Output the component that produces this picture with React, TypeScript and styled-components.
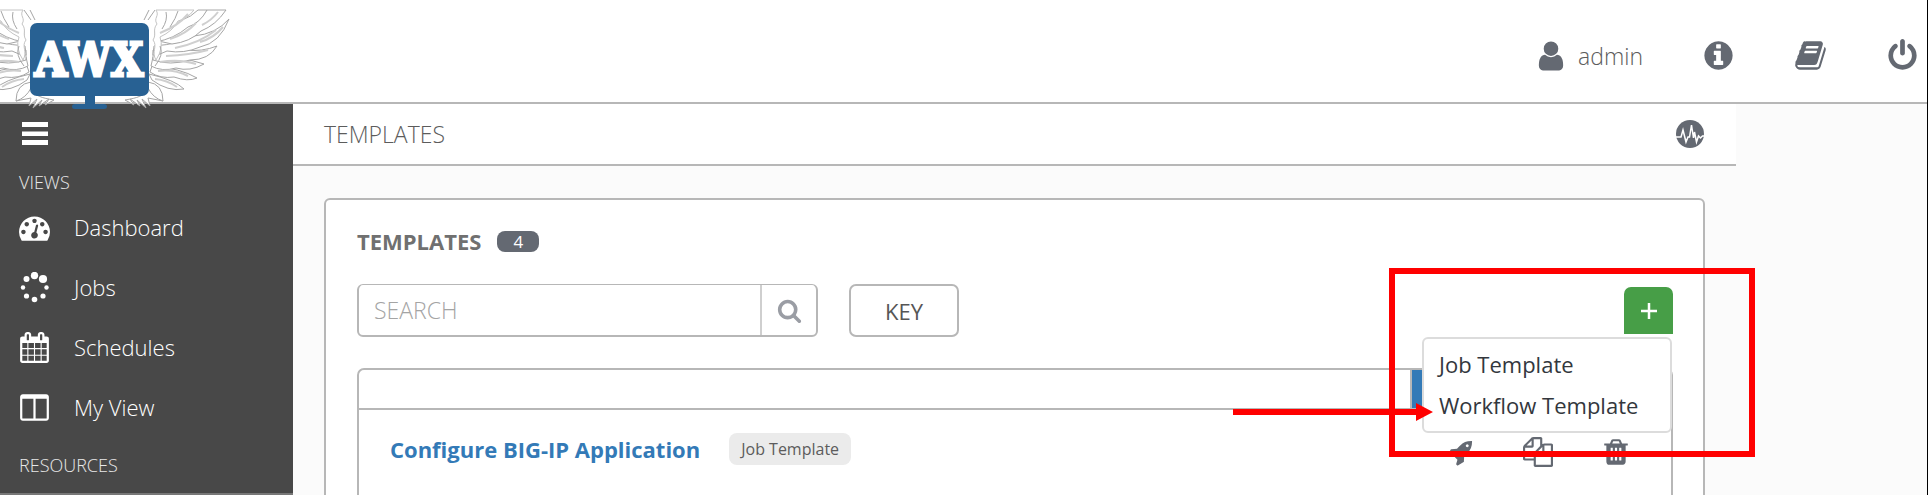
import React from "react";
import styled, { createGlobalStyle } from "styled-components";

const line = "#b7b7b7";
const slate = "#646972";

const GlobalStyle = createGlobalStyle`
  *, *::before, *::after { box-sizing: border-box; }
  body { margin: 0; background: #fbfbfb; font-family: "Open Sans", sans-serif; color: #707070; }
  button, input { font-family: inherit; }
  button { padding: 0; border: 0; background: none; cursor: pointer; color: inherit; }
  a { text-decoration: none; color: inherit; }
`;

const Shell = styled.div`
  height: 100vh;
  overflow: hidden;
  display: flex;
  flex-direction: column;
  border-right: 1px solid #000;
`;

const Header = styled.header`
  position: relative;
  z-index: 1;
  flex: none;
  height: 104px;
  display: flex;
  justify-content: space-between;
  background: #fff;
  border-bottom: 2px solid ${line};
`;

const LogoLink = styled.a`
  display: block;
  width: 240px;
  height: 110px;
`;

const Account = styled.nav`
  display: flex;
  align-items: center;
  gap: 59px;
  padding: 9px 8px 0 0;
  color: ${slate};
`;

const AccountLink = styled.a`
  display: flex;
  align-items: center;
  gap: 10px;
  font-size: 23px;
  line-height: 32px;
  font-weight: 300;

  span { color: #5c5c5c; }
`;

const Body = styled.div`
  flex: 1;
  min-height: 0;
  display: flex;
  padding-right: 191px;
`;

const Sidebar = styled.nav`
  flex: none;
  width: 293px;
  padding-top: 16px;
  background: #484848;
  border-bottom: 2px solid #777;
  color: #fff;
`;

const MenuToggle = styled.button`
  display: flex;
  width: 26px;
  height: 26px;
  margin-left: 22px;
`;

const SideHeading = styled.h2`
  margin: 0;
  padding-left: 19px;
  font-size: 18px;
  line-height: 24px;
  font-weight: 300;
  color: #e8e8e8;
`;

const SideGroup = styled.section`
  padding-top: 24px;
  & + & { padding-top: 16px; }
`;

const SideList = styled.ul`
  margin: 0;
  padding: 3px 0 0;
  list-style: none;
`;

const SideLink = styled.a`
  display: flex;
  align-items: center;
  gap: 24px;
  height: 60px;
  padding-left: 19px;
  font-size: 22px;
  font-weight: 300;
`;

const Main = styled.main`
  flex: 1;
  min-width: 0;
`;

const Crumbs = styled.div`
  display: flex;
  align-items: center;
  justify-content: space-between;
  height: 62px;
  padding: 0 32px 0 31px;
  background: #fff;
  border-bottom: 2px solid ${line};
  font-size: 23px;
  font-weight: 300;
  color: #5c5c5c;
`;

const IconButton = styled.button`
  display: flex;
  color: ${slate};
`;

const Panel = styled.section`
  margin: 32px 31px;
  height: 400px;
  padding: 25px 30px 27px 31px;
  background: #fff;
  border: 2px solid ${line};
  border-radius: 6px;
`;

const PanelTitle = styled.h1`
  display: flex;
  align-items: center;
  gap: 16px;
  margin: 0;
  font-size: 22px;
  line-height: 32px;
`;

const Count = styled.span`
  width: 42px;
  border-radius: 8px;
  background: ${slate};
  color: #fff;
  font-size: 17px;
  line-height: 21px;
  font-weight: 400;
  text-align: center;
`;

const Toolbar = styled.div`
  display: flex;
  align-items: center;
  gap: 31px;
  margin: 27px 0 31px;
`;

const SearchForm = styled.form`
  display: flex;
  width: 461px;
  height: 53px;
  border: 2px solid ${line};
  border-top-width: 1px;
  border-radius: 6px;
`;

const SearchInput = styled.input`
  flex: 1;
  min-width: 0;
  padding: 0 15px;
  border: 0;
  outline: 0;
  background: none;
  font-size: 23px;
  font-weight: 300;
  &::placeholder { color: #a4a4a4; opacity: 1; }
`;

const SearchButton = styled.button`
  display: flex;
  align-items: center;
  justify-content: center;
  width: 56px;
  border-left: 2px solid #cfcfcf;
  color: #9a9da4;
`;

const KeyButton = styled.button`
  width: 110px;
  height: 53px;
  border: 2px solid ${line};
  border-radius: 7px;
  font-size: 22px;
  color: #565656;
`;

const AddMenu = styled.div`
  position: relative;
  z-index: 2;
  margin-left: auto;
`;

const AddButton = styled.button`
  display: flex;
  align-items: center;
  justify-content: center;
  width: 49px;
  height: 47px;
  border-radius: 7px 7px 0 0;
  background: #479e47;
  color: #fff;
`;

const Dropdown = styled.ul`
  position: absolute;
  top: 50px;
  right: 1px;
  width: 250px;
  margin: 0;
  padding: 5px 0;
  list-style: none;
  background: #fff;
  border: 2px solid #dcdcdc;
  border-radius: 6px;
`;

const DropdownLink = styled.a`
  display: block;
  padding-left: 15px;
  font-size: 22px;
  line-height: 41px;
  color: #33373d;
`;

const Highlight = styled.div`
  position: absolute;
  top: -19px;
  right: -82px;
  width: 366px;
  height: 189px;
  border: 6px solid #f00;
  pointer-events: none;
`;

const Pointer = styled.svg`
  position: absolute;
  top: 116px;
  right: 240px;
`;

const List = styled.div`
  height: 240px;
  border: 2px solid ${line};
  border-radius: 7px;
`;

const ListHeader = styled.div`
  display: flex;
  justify-content: flex-end;
  height: 40px;
  border-bottom: 2px solid ${line};
`;

const ActiveSort = styled.div`
  width: 261px;
  border-left: 2px solid ${line};
  background: linear-gradient(#337ab7, #337ab7) no-repeat 0 0 / 240px 100%;
`;

const Row = styled.div`
  display: flex;
  align-items: center;
  height: 78px;
  padding: 0 40px 0 31px;
`;

const RowLink = styled.a`
  font-size: 22px;
  font-weight: 700;
  color: #337ab7;
`;

const Tag = styled.span`
  margin-left: 29px;
  padding: 0 12px;
  border-radius: 8px;
  background: #ebebeb;
  color: #5c5c5c;
  font-size: 16px;
  line-height: 32px;
`;

const RowActions = styled.div`
  display: flex;
  gap: 48px;
  margin: 6px 0 0 auto;
`;

const ActionButton = styled(IconButton)`
  width: 30px;
  height: 30px;
  align-items: center;
  justify-content: center;
`;

const paths = {
  user: "M1536 1399q0 109-62.5 187t-150.5 78h-854q-88 0-150.5-78t-62.5-187q0-85 8.5-160.5t31.5-152 58.5-131 94-89 134.5-34.5q131 128 313 128t313-128q76 0 134.5 34.5t94 89 58.5 131 31.5 152 8.5 160.5zm-256-887q0 159-112.5 271.5t-271.5 112.5-271.5-112.5-112.5-271.5 112.5-271.5 271.5-112.5 271.5 112.5 112.5 271.5z",
  info: "M1152 1376v-160q0-14-9-23t-23-9h-96v-512q0-14-9-23t-23-9h-320q-14 0-23 9t-9 23v160q0 14 9 23t23 9h96v320h-96q-14 0-23 9t-9 23v160q0 14 9 23t23 9h448q14 0 23-9t9-23zm-128-896v-160q0-14-9-23t-23-9h-192q-14 0-23 9t-9 23v160q0 14 9 23t23 9h192q14 0 23-9t9-23zm640 416q0 209-103 385.5t-279.5 279.5-385.5 103-385.5-103-279.5-279.5-103-385.5 103-385.5 279.5-279.5 385.5-103 385.5 103 279.5 279.5 103 385.5z",
  book: "M1703 478q40 57 18 129l-275 906q-19 64-76.5 107.5t-122.5 43.5h-923q-77 0-148.5-53.5t-99.5-131.5q-24-67-2-127 0-4 3-27t4-37q1-8-3-21.5t-3-19.5q2-11 8-21t16.5-23.5 16.5-23.5q23-38 45-91.5t30-91.5q3-10 .5-30t-.5-28q3-11 17-28t17-23q21-36 42-92t25-90q1-9-2.5-32t.5-28q4-13 22-30.5t22-22.5q19-26 42.5-84.5t27.5-96.5q1-8-3-25.5t-2-26.5q2-8 9-18t18-23 17-21q8-12 16.5-30.5t15-35 16-36 19.5-32 26.5-23.5 36-11.5 47.5 5.5l-1 3q38-9 51-9h761q74 0 114 56t18 130l-274 906q-36 119-71.5 153.5t-128.5 34.5h-869q-27 0-38 15-11 16-1 43 24 70 144 70h923q29 0 56-15.5t35-41.5l300-987q7-22 5-57 38 15 59 43zm-1064 2q-4 13 2 22.5t20 9.5h608q13 0 25.5-9.5t16.5-22.5l21-64q4-13-2-22.5t-20-9.5h-608q-13 0-25.5 9.5t-16.5 22.5zm-83 256q-4 13 2 22.5t20 9.5h608q13 0 25.5-9.5t16.5-22.5l21-64q4-13-2-22.5t-20-9.5h-608q-13 0-25.5 9.5t-16.5 22.5z",
  power: "M1664 896q0 156-61 298t-164 245-245 164-298 61-298-61-245-164-164-245-61-298q0-182 80.5-343t226.5-270q43-32 95.5-25t83.5 50q32 42 24.5 94.5t-49.5 84.5q-98 74-151.5 181t-53.5 228q0 104 40.5 198.5t109.5 163.5 163.5 109.5 198.5 40.5 198.5-40.5 163.5-109.5 109.5-163.5 40.5-198.5q0-121-53.5-228t-151.5-181q-42-32-49.5-84.5t24.5-94.5q31-43 84-50t95 25q146 109 226.5 270t80.5 343zm-640-768v640q0 52-38 90t-90 38-90-38-38-90v-640q0-52 38-90t90-38 90 38 38 90z",
  dashboard: "M384 1152q0-53-37.5-90.5t-90.5-37.5-90.5 37.5-37.5 90.5 37.5 90.5 90.5 37.5 90.5-37.5 37.5-90.5zm192-448q0-53-37.5-90.5t-90.5-37.5-90.5 37.5-37.5 90.5 37.5 90.5 90.5 37.5 90.5-37.5 37.5-90.5zm428 481l101-382q6-26-7.5-48.5t-38.5-29.5-48 6.5-30 39.5l-101 382q-60 5-107 43.5t-63 98.5q-20 77 20 146t117 89 146-20 89-117q16-60-6-117t-72-91zm660-33q0-53-37.5-90.5t-90.5-37.5-90.5 37.5-37.5 90.5 37.5 90.5 90.5 37.5 90.5-37.5 37.5-90.5zm-640-640q0-53-37.5-90.5t-90.5-37.5-90.5 37.5-37.5 90.5 37.5 90.5 90.5 37.5 90.5-37.5 37.5-90.5zm448 192q0-53-37.5-90.5t-90.5-37.5-90.5 37.5-37.5 90.5 37.5 90.5 90.5 37.5 90.5-37.5 37.5-90.5zm320 448q0 261-141 483-19 29-54 29h-1402q-35 0-54-29-141-221-141-483 0-182 71-348t191-286 286-191 348-71 348 71 286 191 191 286 71 348z",
  calendar: "M192 1664h288v-288h-288v288zm352 0h320v-288h-320v288zm-352-352h288v-320h-288v320zm352 0h320v-320h-320v320zm-352-384h288v-288h-288v288zm736 736h320v-288h-320v288zm-384-736h320v-288h-320v288zm768 736h288v-288h-288v288zm-384-352h320v-320h-320v320zm-352-864v-288q0-13-9.5-22.5t-22.5-9.5h-64q-13 0-22.5 9.5t-9.5 22.5v288q0 13 9.5 22.5t22.5 9.5h64q13 0 22.5-9.5t9.5-22.5zm736 864h288v-320h-288v320zm-384-384h320v-288h-320v288zm384 0h288v-288h-288v288zm32-480v-288q0-13-9.5-22.5t-22.5-9.5h-64q-13 0-22.5 9.5t-9.5 22.5v288q0 13 9.5 22.5t22.5 9.5h64q13 0 22.5-9.5t9.5-22.5zm384-64v1280q0 52-38 90t-90 38h-1408q-52 0-90-38t-38-90v-1280q0-52 38-90t90-38h128v-96q0-66 47-113t113-47h64q66 0 113 47t47 113v96h384v-96q0-66 47-113t113-47h64q66 0 113 47t47 113v96h128q52 0 90 38t38 90z",
  columns: "M224 1536h608v-1152h-640v1120q0 13 9.5 22.5t22.5 9.5zm1376-32v-1120h-640v1152h608q13 0 22.5-9.5t9.5-22.5zm128-1216v1216q0 66-47 113t-113 47h-1344q-66 0-113-47t-47-113v-1216q0-66 47-113t113-47h1344q66 0 113 47t47 113z",
  search: "M1216 832q0-185-131.5-316.5t-316.5-131.5-316.5 131.5-131.5 316.5 131.5 316.5 316.5 131.5 316.5-131.5 131.5-316.5zm512 832q0 52-38 90t-90 38q-54 0-90-38l-343-342q-179 124-399 124-143 0-273.5-55.5t-225-150-150-225-55.5-273.5 55.5-273.5 150-225 225-150 273.5-55.5 273.5 55.5 225 150 150 225 55.5 273.5q0 220-124 399l343 343q37 37 37 90z",
  rocket: "M1440 448q0-40-28-68t-68-28-68 28-28 68 28 68 68 28 68-28 28-68zm224-288q0 249-75.5 430.5t-253.5 360.5q-81 80-195 176l-20 379q-2 16-16 26l-384 224q-7 4-16 4-12 0-23-9l-64-64q-13-14-8-32l85-276-281-281-276 85q-3 1-9 1-14 0-23-9l-64-64q-17-19-5-39l224-384q10-14 26-16l379-20q96-114 176-195 188-187 358-258t431-71q14 0 24 9.5t10 22.5z",
  copy: "M1696 384q40 0 68 28t28 68v1216q0 40-28 68t-68 28h-960q-40 0-68-28t-28-68v-288h-544q-40 0-68-28t-28-68v-672q0-40 20-88t48-76l408-408q28-28 76-48t88-20h416q40 0 68 28t28 68v328q68-40 128-40h416zm-544 213l-299 299h299v-299zm-640-384l-299 299h299v-299zm196 647l316-316v-416h-384v416q0 40-28 68t-68 28h-416v640h512v-256q0-40 20-88t48-76zm956 804v-1152h-384v416q0 40-28 68t-68 28h-416v640h896z",
  trash: "M704 1376v-704q0-14-9-23t-23-9h-64q-14 0-23 9t-9 23v704q0 14 9 23t23 9h64q14 0 23-9t9-23zm256 0v-704q0-14-9-23t-23-9h-64q-14 0-23 9t-9 23v704q0 14 9 23t23 9h64q14 0 23-9t9-23zm256 0v-704q0-14-9-23t-23-9h-64q-14 0-23 9t-9 23v704q0 14 9 23t23 9h64q14 0 23-9t9-23zm-544-992h448l-48-117q-7-9-17-11h-317q-10 2-17 11zm928 32v64q0 14-9 23t-23 9h-96v948q0 83-47 143.5t-113 60.5h-832q-66 0-113-58.5t-47-141.5v-952h-96q-14 0-23-9t-9-23v-64q0-14 9-23t23-9h309l70-167q15-37 54-63t79-26h320q40 0 79 26t54 63l70 167h309q14 0 23 9t9 23z",
};

function Icon({ name, size }: { name: keyof typeof paths; size: number }) {
  return (
    <svg width={size} height={size} viewBox="0 0 1792 1792" fill="currentColor" overflow="visible" aria-hidden="true">
      <path d={paths[name]} />
    </svg>
  );
}

function JobsIcon() {
  const dots = [[15.5, 3.5, 3.7], [24, 7, 4.1], [27.5, 15.5, 2.2], [24, 24, 2.6], [15.5, 27.5, 2.8], [7.5, 24, 2.6], [4, 15.5, 2.2], [7.5, 7, 3]];
  return (
    <svg width="31" height="31" fill="currentColor" aria-hidden="true">
      {dots.map(([x, y, r]) => <circle key={`${x}-${y}`} cx={x} cy={y} r={r} />)}
    </svg>
  );
}

function ActivityIcon() {
  return (
    <svg width="28" height="28" viewBox="0 0 28 28" fill="none" aria-hidden="true">
      <circle cx="14" cy="14" r="14" fill="currentColor" />
      <path d="M0 17h5l2-7 3 12 2-5h1.500L15.500 5l2 13 1-6 2 10 2-6 2 2 2-2h2" stroke="#fff" strokeWidth="1.500" />
    </svg>
  );
}

/* One wing, drawn to the right of the monitor; the left one mirrors it. */
function Wing() {
  return (
    <g fill="#fff" stroke="#a6a6a6" strokeWidth="1" strokeLinejoin="round">
      <path d="M148 88C145 96 137 98 125 100L134 105 130 99 140 106 137 100 146 108 142 99 150 106 148 98 163 101 154 90Z" />
      <path d="M148 82Q163 84 163 101Q153 98 148 88Z" />
      <path d="M149 74Q175 80 184 89Q168 92 152 80Z" />
      <path d="M152 66Q180 68 197 78Q188 82 174 77Q160 79 150 72Z" />
      <path d="M153 57Q180 56 204 64Q190 72 176 68Q162 72 151 66Z" />
      <path d="M153 50Q174 46 186 50Q202 52 217 46Q209 60 190 60Q170 66 153 60Z" />
      <path d="M154 46Q180 44 194 36Q216 34 229 19Q220 43 200 47Q184 54 167 51Q160 55 153 55Z" />
      <path d="M154 40Q172 38 184 27Q196 23 207 10H226Q216 25 201 31Q190 42 172 44Z" />
      <path d="M155 30Q172 28 182 20Q191 17 198 10H207Q200 23 188 27Q174 39 155 42Z" />
      <path d="M156 10C160 16 153 18 157 24C152 30 157 34 153 40C158 46 151 52 156 60Q164 48 160 37Q173 31 178 21Q187 19 194 10Z" stroke="#c4c4c4" />
      <path d="M149 10L144 20M155 10L148 20M160 46Q164 55 155 66M162 29Q168 20 166 12M170 27Q176 18 178 11" fill="none" />
      <path d="M160 33Q178 26 188 14M170 39Q186 34 196 23M175 48Q200 43 216 30M166 56Q190 55 208 50M160 62Q180 59 196 64M158 71Q174 69 188 76M155 79Q167 80 177 87M202 25Q212 20 218 12M200 42Q214 38 223 27" fill="none" stroke="#cfcfcf" strokeWidth="2" />
    </g>
  );
}

function Logo() {
  return (
    <svg width="240" height="110" viewBox="0 0 240 110" role="img" aria-label="AWX">
      <Wing />
      <g transform="translate(179 0) scale(-1 1)"><Wing /></g>
      <rect x="30" y="23" width="119" height="73" rx="7" fill="#286193" />
      <path d="M85 95h10v9h9q3 0 3 2.500t-3 2.500H75q-3 0-3-2.500t3-2.500h10z" fill="#286193" />
      <text x="89" y="76" textAnchor="middle" fontFamily="'DejaVu Serif Condensed', 'DejaVu Serif', serif" fontSize="46" fontWeight="700" fill="#fff" stroke="#fff" strokeWidth="3">AWX</text>
    </svg>
  );
}

export default function App() {
  return (
    <Shell>
      <GlobalStyle />
      <Header>
        <LogoLink href="#home" aria-label="AWX home"><Logo /></LogoLink>
        <Account aria-label="Account">
          <AccountLink href="#admin"><Icon name="user" size={34} /><span>admin</span></AccountLink>
          <AccountLink href="#about" aria-label="About"><Icon name="info" size={33} /></AccountLink>
          <AccountLink href="#docs" aria-label="Documentation"><Icon name="book" size={33} /></AccountLink>
          <AccountLink href="#logout" aria-label="Log out"><Icon name="power" size={33} /></AccountLink>
        </Account>
      </Header>
      <Body>
        <Sidebar aria-label="Main">
          <MenuToggle aria-label="Toggle menu">
            <svg width="26" height="26" fill="currentColor" aria-hidden="true">
              <path d="M0 2h26v5H0zM0 11.500h26v4.500H0zM0 20h26v5H0z" />
            </svg>
          </MenuToggle>
          <SideGroup>
            <SideHeading>VIEWS</SideHeading>
            <SideList>
              <li><SideLink href="#dashboard"><Icon name="dashboard" size={31} />Dashboard</SideLink></li>
              <li><SideLink href="#jobs"><JobsIcon />Jobs</SideLink></li>
              <li><SideLink href="#schedules"><Icon name="calendar" size={31} />Schedules</SideLink></li>
              <li><SideLink href="#my-view"><Icon name="columns" size={31} />My View</SideLink></li>
            </SideList>
          </SideGroup>
          <SideGroup>
            <SideHeading>RESOURCES</SideHeading>
          </SideGroup>
        </Sidebar>
        <Main>
          <Crumbs>
            <span>TEMPLATES</span>
            <IconButton aria-label="Activity stream"><ActivityIcon /></IconButton>
          </Crumbs>
          <Panel>
            <PanelTitle>TEMPLATES <Count>4</Count></PanelTitle>
            <Toolbar>
              <SearchForm role="search">
                <SearchInput type="text" placeholder="SEARCH" aria-label="Search templates" />
                <SearchButton type="button" aria-label="Search"><Icon name="search" size={25} /></SearchButton>
              </SearchForm>
              <KeyButton type="button">KEY</KeyButton>
              <AddMenu>
                <AddButton type="button" aria-label="Add template">
                  <svg width="16" height="16" stroke="currentColor" strokeWidth="2.500" aria-hidden="true"><path d="M8 0v16M0 8h16" /></svg>
                </AddButton>
                <Dropdown>
                  <li><DropdownLink href="#job-template">Job Template</DropdownLink></li>
                  <li><DropdownLink href="#workflow-template">Workflow Template</DropdownLink></li>
                </Dropdown>
                <Highlight />
                <Pointer width="200" height="18" fill="#f00" aria-hidden="true">
                  <path d="M0 6h183V0l17 9-17 9v-6H0z" />
                </Pointer>
              </AddMenu>
            </Toolbar>
            <List>
              <ListHeader><ActiveSort /></ListHeader>
              <Row>
                <RowLink href="#configure">Configure BIG-IP Application</RowLink>
                <Tag>Job Template</Tag>
                <RowActions>
                  <ActionButton aria-label="Launch"><Icon name="rocket" size={27} /></ActionButton>
                  <ActionButton aria-label="Copy"><Icon name="copy" size={30} /></ActionButton>
                  <ActionButton aria-label="Delete"><Icon name="trash" size={30} /></ActionButton>
                </RowActions>
              </Row>
            </List>
          </Panel>
        </Main>
      </Body>
    </Shell>
  );
}
